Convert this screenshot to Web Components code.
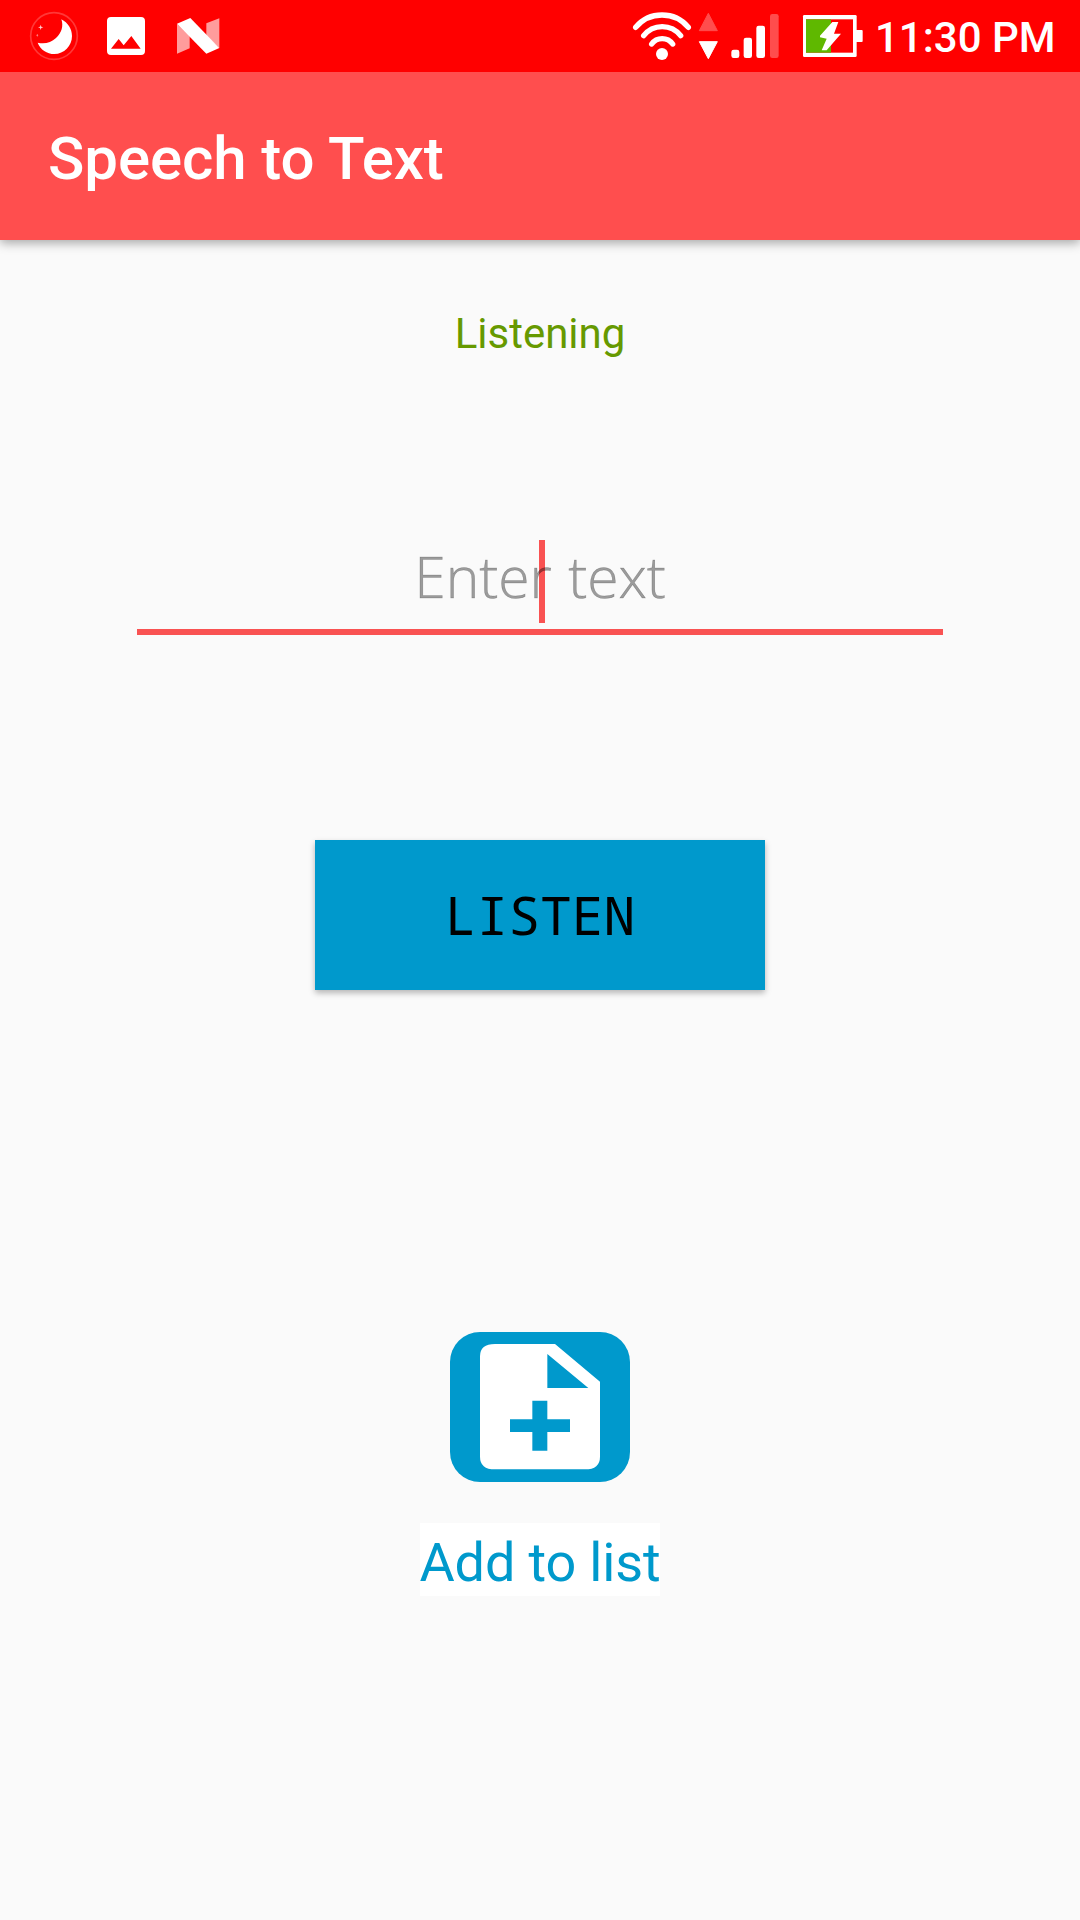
<!DOCTYPE html>
<html lang="en">
<head>
<meta charset="utf-8">
<meta name="viewport" content="width=device-width">
<title>Speech to Text</title>
<style>
html,body{margin:0;padding:0;background:#fafafa}
body{font-family:Roboto,sans-serif}
</style>
</head>
<body>
<speech-app></speech-app>
<script>
const define = (name, html) => {
  const t = document.createElement('template');
  t.innerHTML = html;
  customElements.define(name, class extends HTMLElement {
    constructor() {
      super();
      this.attachShadow({mode: 'open'}).append(t.content.cloneNode(true));
    }
  });
};

define('status-bar', `
<style>
:host{display:flex;height:72px;background:#f00;color:#fff;justify-content:space-between;overflow:hidden;position:relative;z-index:1}
svg{display:block;flex:none}
div{display:flex}
span{font:500 42px/49px Roboto,sans-serif;padding:13px 0 0 5px;white-space:nowrap;width:205px}
</style>
<div>
<svg width="260" height="72" viewBox="0 0 780 216">
  <circle cx="162" cy="108" r="70" fill="none" stroke="#ff3838" stroke-width="5"/>
  <path d="M184 58C204 69 216 86 216 108C216 138 192 162 163 162C141 162 121 149 113 128C134 133 153 128 168 114C185 99 191 78 184 58Z" fill="#fff"/>
  <path d="M122 74L124 80L130 82L124 84L122 90L120 84L114 82L120 80Z" fill="#fff" opacity=".8"/>
  <path d="M112 102L115 106L112 110L109 106Z" fill="#fff" opacity=".5"/>
  <path fill="#fff" fill-rule="evenodd" d="M333 51H423Q435 51 435 63V153Q435 165 423 165H333Q321 165 321 153V63Q321 51 333 51ZM333 146H422L394 108L371 136L356 117Z"/>
  <path d="M531 71L569 108V145L531 161ZM619 70L658 55V144L619 108Z" fill="#ff9c9c"/>
  <path d="M531 71L571 54L658 144L619 161Z" fill="#fff"/>
</svg>
</div>
<div>
<svg width="250" height="72" viewBox="0 0 750 216">
  <g fill="none" stroke="#fff" stroke-width="16" stroke-linecap="round">
    <path d="M47 82A103 103 0 0 1 205 82"/>
    <path d="M71 107A70 70 0 0 1 182 107"/>
    <path d="M95 132A39 39 0 0 1 158 132"/>
  </g>
  <circle cx="126" cy="162" r="18" fill="#fff"/>
  <path d="M265 40L292 92H238Z" fill="#ff4d4d" stroke="#ff4d4d" stroke-width="3" stroke-linejoin="round"/>
  <path d="M238 125H292L265 176Z" fill="#fff" stroke="#fff" stroke-width="3" stroke-linejoin="round"/>
  <g fill="#fff">
    <rect x="334" y="149" width="24" height="25" rx="7"/>
    <rect x="371" y="113" width="25" height="61" rx="7"/>
    <rect x="409" y="77" width="26" height="97" rx="7"/>
    <rect x="450" y="42" width="26" height="132" rx="7" fill="#ff4d4d"/>
    <rect x="549" y="45" width="161" height="126" rx="4"/>
    <rect x="705" y="90" width="23" height="36" rx="3"/>
  </g>
  <rect x="558" y="58" width="141" height="100" fill="#f00"/>
  <rect x="558" y="58" width="75" height="100" fill="#5fb800"/>
  <path d="M637 66H655L642 101H663L620 151H605L620 116L600 112V107Z" fill="#fff"/>
</svg>
<span>11:30 PM</span>
</div>`);

define('app-bar', `
<style>
:host{display:flex;align-items:center;height:168px;box-sizing:border-box;padding:6px 48px 0;background:#ff4e4e;color:#fff;font:500 60px/70px Roboto,sans-serif;letter-spacing:-.08px;box-shadow:0 3px 10px rgba(0,0,0,.34)}
</style><slot></slot>`);

define('status-label', `
<style>:host{display:block;text-align:center;color:#690;font:400 42px/49px Roboto,sans-serif}</style><slot></slot>`);

define('text-field', `
<style>
:host{display:block;box-sizing:border-box;width:806px;height:95px;border-bottom:6px solid #f95252;text-align:center;position:relative}
.hint{display:flex;justify-content:center;color:rgba(0,0,0,.38);font:300 57px/72px "Open Sans",sans-serif;-webkit-text-stroke:.5px rgba(0,0,0,.3);letter-spacing:-.1px;word-spacing:2px;position:relative;z-index:1;white-space:pre}
i{position:absolute;left:402px;top:0;width:6px;height:83px;background:#f95252}
</style><i></i><div class="hint"><slot></slot></div>`);

define('action-button', `
<style>
:host{display:block}
button{display:flex;align-items:center;justify-content:center;width:450px;height:150px;margin:0;padding:0;border:0;background:#09c;color:#000;font:400 53px/64px "Noto Sans Mono","DejaVu Sans Mono",monospace;box-shadow:0 3px 6px rgba(0,0,0,.28)}
</style><button><slot></slot></button>`);

define('note-add', `
<style>
:host{display:flex;flex-direction:column;align-items:center;gap:41px}
svg{display:block}
span{display:block;background:#fff;color:#09c;font:400 54px/63px Roboto,sans-serif;letter-spacing:-.16px;padding:8px 0 2px;white-space:nowrap}
</style>
<svg width="180" height="150" viewBox="0 0 540 450">
  <rect width="540" height="450" rx="90" fill="#09c"/>
  <path fill="#fff" fill-rule="evenodd" d="M135 36H315L450 149V374Q450 412 405 412H135Q90 412 90 374V73Q90 36 135 36ZM292 66V168H415ZM247 206V262H180V300H247V356H292V300H360V262H292V206Z"/>
</svg>
<span><slot></slot></span>`);

define('speech-app', `
<style>
:host{display:flex;flex-direction:column;width:1080px;height:1920px;background:#fafafa;overflow:hidden}
main{display:flex;flex-direction:column;align-items:center}
status-label{margin-top:69px}
text-field{margin-top:182px}
action-button{margin-top:205px}
note-add{margin-top:342px}
</style>
<status-bar></status-bar>
<app-bar>Speech to Text</app-bar>
<main>
<status-label>Listening</status-label>
<text-field>Enter text</text-field>
<action-button>LISTEN</action-button>
<note-add>Add to list</note-add>
</main>`);
</script>
</body>
</html>
